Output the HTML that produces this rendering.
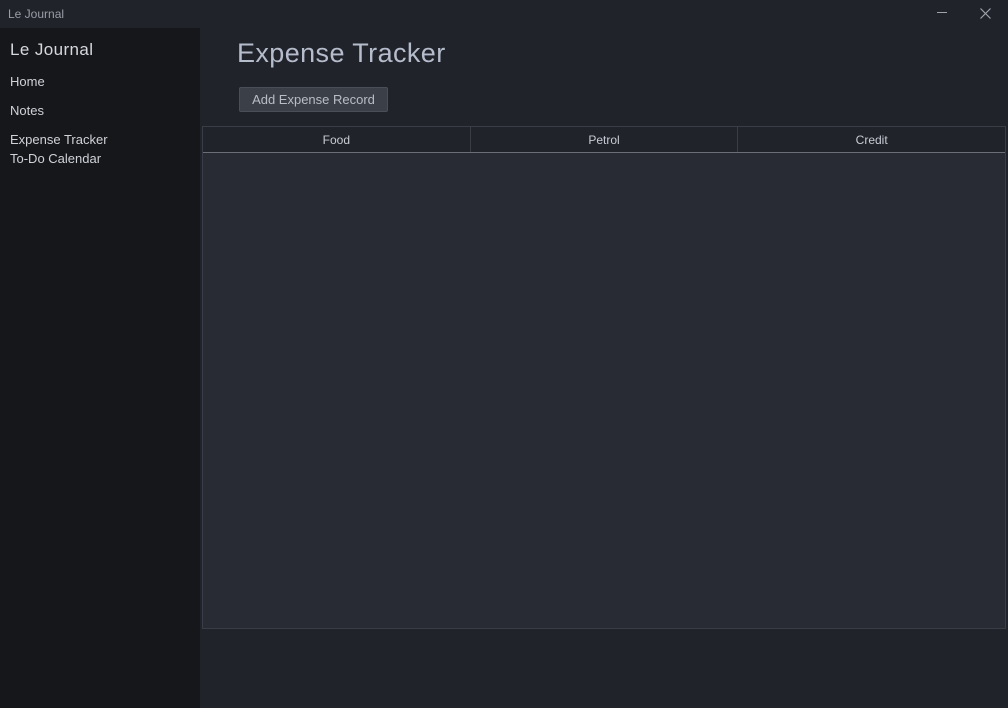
<!DOCTYPE html>
<html><head><style>
*{margin:0;padding:0;box-sizing:border-box}
body{width:1008px;height:708px;background:#21232b;font-family:"Liberation Sans",sans-serif;position:relative;overflow:hidden;color:#c9ccd4}
.title{position:absolute;left:8px;top:7px;font-size:12px;color:#9a9da6}
.min{position:absolute;left:937px;top:12px;width:10px;height:1px;background:#a0a3ab}
.side{position:absolute;left:0;top:28px;width:200px;height:680px;background:#16171b}
.side h1{position:absolute;left:10px;top:12px;font-size:17px;font-weight:normal;color:#d5d8de;letter-spacing:0.4px}
.side div{position:absolute;left:10px;font-size:13px;color:#cfd2d8}
h2{position:absolute;left:237px;top:38px;font-size:27px;font-weight:normal;color:#b5bccb;letter-spacing:0.4px}
.btn{position:absolute;left:239px;top:87px;width:149px;height:25px;background:#3b3f48;border:1px solid #4a4e57;border-radius:2px;font-size:13px;color:#b9bdc6;text-align:center;line-height:23px}
.tbl{position:absolute;left:202px;top:126px;width:804px;height:503px;background:#282b34;border:1px solid #3a3d45}
.hd{height:26px;background:#21232b;border-bottom:1px solid #6b6e76;display:flex}
.hd div{flex:1;text-align:center;font-size:12px;line-height:26px;color:#c9ccd4;border-right:1px solid #3a3d45}
.hd div:last-child{border-right:none}
</style></head><body>
<div class="title">Le Journal</div>
<div class="min"></div>
<svg style="position:absolute;left:980px;top:8px" width="11" height="11"><path d="M0.5 0.5L10.5 10.5M10.5 0.5L0.5 10.5" stroke="#a0a3ab" stroke-width="1.2"/></svg>
<div class="side">
<h1>Le Journal</h1>
<div style="top:46px">Home</div>
<div style="top:75px">Notes</div>
<div style="top:104px">Expense Tracker</div>
<div style="top:123px">To-Do Calendar</div>
</div>
<h2>Expense Tracker</h2>
<div class="btn">Add Expense Record</div>
<div class="tbl"><div class="hd"><div>Food</div><div>Petrol</div><div>Credit</div></div></div>
</body></html>
